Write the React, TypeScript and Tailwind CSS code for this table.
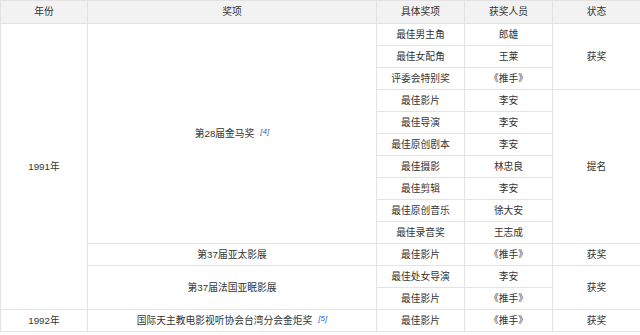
import React from "react";

const th = "h-[23px] border border-[#e3e3e3] bg-[#f2f2f2] font-normal text-[#333] text-center";
const td = "h-[22px] border border-[#e3e3e3] text-center text-[#333] p-0";

const Sup = ({ n }: { n: number }) => (
  <sup className="ml-[6px] text-[8px] italic text-[#3366cc] relative -top-[3px]">[{n}]</sup>
);

const App = () => {
  return (
    <div className="w-[640px] h-[335px] bg-white overflow-hidden">
      <table
        className="w-[640px] table-fixed border-collapse text-[9.75px] leading-none"
        style={{ fontFamily: '"Liberation Sans", "Noto Sans CJK SC", sans-serif' }}
      >
        <colgroup>
          <col className="w-[87px]" />
          <col className="w-[289px]" />
          <col className="w-[88px]" />
          <col className="w-[88px]" />
          <col className="w-[88px]" />
        </colgroup>
        <thead>
          <tr>
            <th className={th}>年份</th>
            <th className={th}>奖项</th>
            <th className={th}>具体奖项</th>
            <th className={th}>获奖人员</th>
            <th className={th}>状态</th>
          </tr>
        </thead>
        <tbody>
          <tr>
            <td className={td} rowSpan={13}>1991年</td>
            <td className={td} rowSpan={10}>
              第28届金马奖
              <Sup n={4} />
            </td>
            <td className={td}>最佳男主角</td>
            <td className={td}>郎雄</td>
            <td className={td} rowSpan={3}>获奖</td>
          </tr>
          <tr>
            <td className={td}>最佳女配角</td>
            <td className={td}>王莱</td>
          </tr>
          <tr>
            <td className={td}>评委会特别奖</td>
            <td className={td}>《推手》</td>
          </tr>
          <tr>
            <td className={td}>最佳影片</td>
            <td className={td}>李安</td>
            <td className={td} rowSpan={7}>提名</td>
          </tr>
          <tr>
            <td className={td}>最佳导演</td>
            <td className={td}>李安</td>
          </tr>
          <tr>
            <td className={td}>最佳原创剧本</td>
            <td className={td}>李安</td>
          </tr>
          <tr>
            <td className={td}>最佳摄影</td>
            <td className={td}>林忠良</td>
          </tr>
          <tr>
            <td className={td}>最佳剪辑</td>
            <td className={td}>李安</td>
          </tr>
          <tr>
            <td className={td}>最佳原创音乐</td>
            <td className={td}>徐大安</td>
          </tr>
          <tr>
            <td className={td}>最佳录音奖</td>
            <td className={td}>王志成</td>
          </tr>
          <tr>
            <td className={td}>第37届亚太影展</td>
            <td className={td}>最佳影片</td>
            <td className={td}>《推手》</td>
            <td className={td}>获奖</td>
          </tr>
          <tr>
            <td className={td} rowSpan={2}>第37届法国亚眠影展</td>
            <td className={td}>最佳处女导演</td>
            <td className={td}>李安</td>
            <td className={td} rowSpan={2}>获奖</td>
          </tr>
          <tr>
            <td className={td}>最佳影片</td>
            <td className={td}>《推手》</td>
          </tr>
          <tr>
            <td className={td}>1992年</td>
            <td className={td}>
              国际天主教电影视听协会台湾分会金炬奖
              <Sup n={5} />
            </td>
            <td className={td}>最佳影片</td>
            <td className={td}>《推手》</td>
            <td className={td}>获奖</td>
          </tr>
        </tbody>
      </table>
    </div>
  );
};

export default App;
